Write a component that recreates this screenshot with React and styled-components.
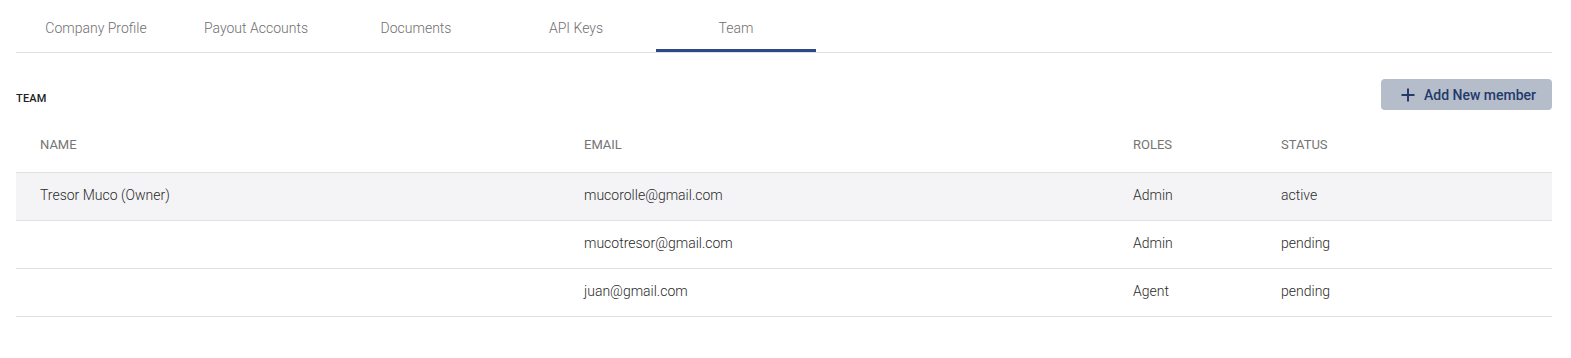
import React from 'react';
import styled, { createGlobalStyle } from 'styled-components';

const Global = createGlobalStyle`
  body { margin: 0; background: #fff; font-family: Roboto, "Noto Sans", sans-serif; }
`;

const Page = styled.div`
  padding: 0 19px 0 16px;
`;

const TabBar = styled.div`
  display: flex;
  border-bottom: 1px solid #e0e0e0;
`;

const Tab = styled.div`
  min-width: 160px;
  height: 52px;
  box-sizing: border-box;
  display: flex;
  align-items: center;
  justify-content: center;
  padding-top: 6px;
  border-bottom: 3px solid ${p => (p.active ? '#2b4a86' : 'transparent')};
  font-size: 14px;
  font-weight: 300;
  color: #707070;
`;

const SectionHead = styled.div`
  display: flex;
  justify-content: space-between;
  align-items: center;
  margin-top: 26px;
`;

const Title = styled.h2`
  margin: 0;
  padding-top: 7px;
  font-size: 11px;
  font-weight: 500;
  letter-spacing: 0.2px;
  color: #222;
  text-transform: uppercase;
`;

const AddButton = styled.button`
  display: flex;
  align-items: center;
  gap: 8px;
  width: 171px;
  height: 31px;
  padding: 0 0 0 19px;
  border: none;
  border-radius: 4px;
  background: #b5bdca;
  color: #233a6b;
  font-family: Roboto, sans-serif;
  font-size: 14px;
  font-weight: 500;
  cursor: pointer;
`;

const Table = styled.div`
  margin-top: 6px;
`;

const Row = styled.div`
  display: grid;
  grid-template-columns: 544px 549px 148px 1fr;
  align-items: center;
  height: ${p => (p.head ? '57px' : '48px')};
  padding-bottom: ${p => (p.head ? '0' : '3px')};
  box-sizing: border-box;
  background: ${p => (p.shaded ? '#f4f4f6' : 'transparent')};
  border-bottom: 1px solid #e0e0e0;
`;

const Cell = styled.div`
  padding-left: 24px;
  font-size: ${p => (p.head ? '13px' : '14px')};
  font-weight: ${p => (p.head ? 400 : 300)};
  color: ${p => (p.head ? '#757575' : '#2a2a2a')};
  text-transform: ${p => (p.head ? 'uppercase' : 'none')};
`;

const tabs = ['Company Profile', 'Payout Accounts', 'Documents', 'API Keys', 'Team'];

const members = [
  { name: 'Tresor Muco (Owner)', email: 'mucorolle@gmail.com', role: 'Admin', status: 'active' },
  { name: '', email: 'mucotresor@gmail.com', role: 'Admin', status: 'pending' },
  { name: '', email: 'juan@gmail.com', role: 'Agent', status: 'pending' },
];

function PlusIcon() {
  return (
    <svg width="16" height="16" viewBox="0 0 16 16" fill="none">
      <path d="M8 1.5v13M1.5 8h13" stroke="currentColor" strokeWidth="2" />
    </svg>
  );
}

export default function App() {
  return (
    <Page>
      <Global />
      <TabBar>
        {tabs.map(t => (
          <Tab key={t} active={t === 'Team'}>{t}</Tab>
        ))}
      </TabBar>
      <SectionHead>
        <Title>Team</Title>
        <AddButton>
          <PlusIcon />
          Add New member
        </AddButton>
      </SectionHead>
      <Table>
        <Row head>
          <Cell head>Name</Cell>
          <Cell head>Email</Cell>
          <Cell head>Roles</Cell>
          <Cell head>Status</Cell>
        </Row>
        {members.map((m, i) => (
          <Row key={m.email} shaded={i === 0}>
            <Cell>{m.name}</Cell>
            <Cell>{m.email}</Cell>
            <Cell>{m.role}</Cell>
            <Cell>{m.status}</Cell>
          </Row>
        ))}
      </Table>
    </Page>
  );
}
